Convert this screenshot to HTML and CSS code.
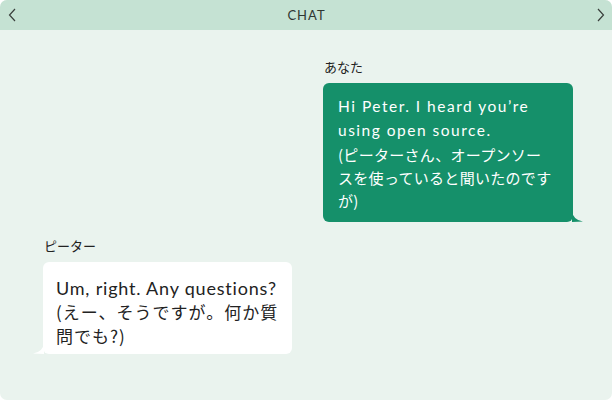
FILE: index.html
```html
<!DOCTYPE html>
<html lang="ja">
<head>
  <meta charset="UTF-8">
  <meta name="viewport" content="width=device-width, initial-scale=1.0">
  <title>CHAT</title>
  <link rel="stylesheet" href="styles.css">
</head>
<body>

  <div class="chat">
    <div class="chat-header">
      <svg class="nav-icon" width="8" height="14" viewBox="0 0 8 14"><path d="M7 1 L1.5 7 L7 13" fill="none" stroke="#3a3f3c" stroke-width="1.2"/></svg>
      <span class="chat-title">CHAT</span>
      <svg class="nav-icon" width="8" height="14" viewBox="0 0 8 14"><path d="M1 1 L6.5 7 L1 13" fill="none" stroke="#3a3f3c" stroke-width="1.2"/></svg>
    </div>

    <div class="messages">
      <div class="msg mine">
        <div class="msg-name">あなた</div>
        <div class="bubble">
          <span class="en">Hi Peter. I heard you’re<br>using open source.</span><br>
          <span class="ja">(ピーターさん、オープンソー<br>スを使っていると聞いたのです<br>が)</span>
          <svg class="tail" width="12" height="11" viewBox="0 0 12 11"><path d="M0 0 Q1 9 11 10.5 L0 11 Z" fill="#15906a"/></svg>
        </div>
      </div>

      <div class="msg theirs">
        <div class="msg-name">ピーター</div>
        <div class="bubble">
          <span class="en">Um, right. Any questions?</span><br>
          <span class="ja">(えー、そうですが。何か質<br>問でも?)</span>
          <svg class="tail" width="12" height="11" viewBox="0 0 12 11"><path d="M12 0 Q11 9 1 10.5 L12 11 Z" fill="#ffffff"/></svg>
        </div>
      </div>
    </div>
  </div>

</body>
</html>
```

FILE: styles.css
```css
body {
  margin: 0;
  background-color: #ffffff;
  font-family: Lato, "Noto Sans CJK JP", sans-serif;
}

.chat {
  width: 612px;
  height: 400px;
  background-color: #eaf3ee;
  border-radius: 7px;
  overflow: hidden;
  display: flex;
  flex-direction: column;
}

.chat-header {
  height: 30px;
  flex-shrink: 0;
  background-color: #c5e2d3;
  display: flex;
  align-items: center;
  justify-content: space-between;
  padding: 0 7px 0 8px;
}

.chat-title {
  font-size: 13px;
  letter-spacing: 1px;
  color: #2f3632;
}

.messages {
  display: flex;
  flex-direction: column;
}

.msg-name {
  font-family: "Noto Sans CJK JP", sans-serif;
  font-size: 13px;
  line-height: 18px;
  color: #222;
  margin-bottom: 7px;
  padding-left: 1px;
}

.msg.mine {
  align-self: flex-end;
  margin: 28px 39px 0 0;
}

.msg.theirs {
  align-self: flex-start;
  margin: 15px 0 0 43px;
}

.bubble {
  position: relative;
  border-radius: 6px;
}

.ja {
  font-family: "Noto Sans CJK JP", sans-serif;
}

.mine .bubble {
  width: 221px;
  padding: 11px 14px 10px 15px;
  background-color: #15906a;
  color: #ffffff;
  line-height: 23.3px;
}

.mine .en {
  font-size: 15.5px;
  letter-spacing: 1.5px;
}

.mine .ja {
  font-size: 15px;
  letter-spacing: 0.3px;
}

.theirs .bubble {
  width: 236px;
  padding: 15px 0 6px 13px;
  background-color: #ffffff;
  color: #222;
  line-height: 23px;
}

.theirs .en {
  font-size: 18px;
  letter-spacing: 0.8px;
}

.theirs .ja {
  font-size: 17px;
  letter-spacing: 1px;
}

.tail {
  position: absolute;
  bottom: 0;
}

.mine .tail {
  right: -11px;
}

.theirs .tail {
  left: -11px;
}
```
